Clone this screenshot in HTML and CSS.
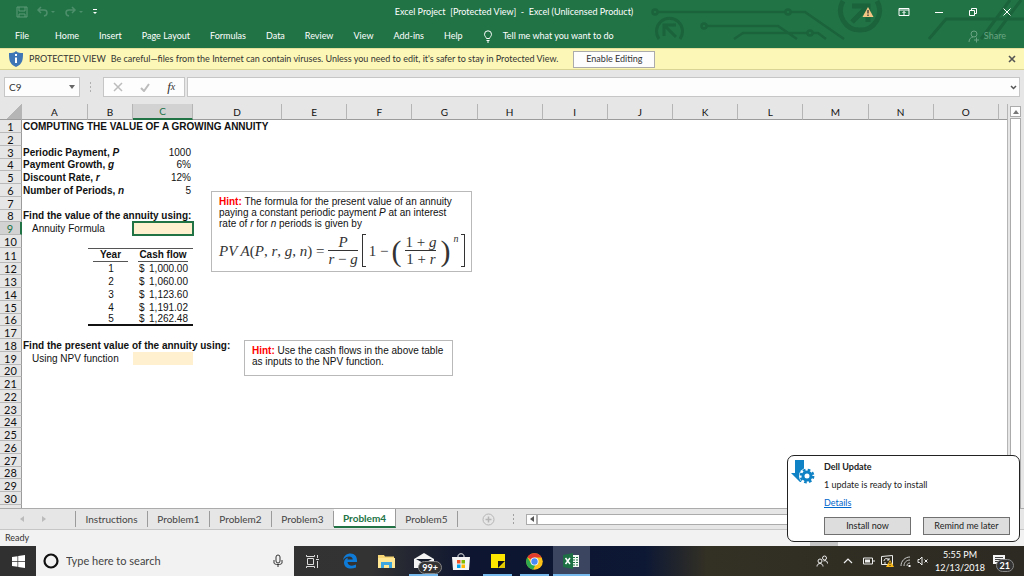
FILE: index.html
```html
<!DOCTYPE html>
<html lang="en">
<head>
    <meta charset="UTF-8">
    <meta name="viewport" content="width=device-width, initial-scale=1.0">
    <title>Excel Project</title>
    <link rel="stylesheet" href="styles.css">
</head>
<body>
    <header class="ribbon">
        <svg class="circuit" width="384" height="40" viewBox="0 0 384 40" fill="none" stroke="#1b633b" stroke-width="2.5">
            <circle cx="15" cy="12" r="2.5"/>
            <path d="M18 12h127M151 12h14l39 27"/>
            <circle cx="148" cy="12" r="2.5"/>
            <circle cx="64" cy="26" r="2.5"/>
            <path d="M67 26h71l19 13M94 39l9-6h64M172 33h6l8 6"/>
            <circle cx="170" cy="33" r="2.5"/>
            <path d="M19 39a13 13 0 1 1 21 0M36 37L25 26M24 36V25h12" stroke-width="3"/>
            <path d="M203 1a19.500 19.500 0 1 0 34 0" stroke-width="5"/>
            <path d="M212 22l15-15M212 6h16v16" stroke-width="5"/>
            <path d="M289 39l17-20h78M341 39l29-39M352 39l29-39" stroke-width="3"/>
        </svg>
        <div class="titlebar">
            <div class="quick">
                <button aria-label="Save"><svg width="12" height="12" viewBox="0 0 12 12" fill="none" stroke="#5c9a77"><path d="M1 1h10v10H1zM3 1v4h6V1M3 11V8h6v3"/></svg></button>
                <button aria-label="Undo"><svg width="20" height="12" viewBox="0 0 20 12" fill="none" stroke="#4d8f6b" stroke-width="1.500"><path d="M5 1L2 4l3 3M2 4h6c4 0 4 5 0 6"/><path d="M15 5h4l-2 2z" fill="#4d8f6b" stroke="none"/></svg></button>
                <button aria-label="Redo"><svg width="20" height="12" viewBox="0 0 20 12" fill="none" stroke="#4d8f6b" stroke-width="1.500"><path d="M8 1l3 3-3 3M11 4H5c-4 0-4 5 0 6"/><path d="M15 5h4l-2 2z" fill="#4d8f6b" stroke="none"/></svg></button>
                <button aria-label="Customize"><svg width="6" height="8" viewBox="0 0 6 8" fill="#fff"><path d="M1 1h4v1H1zM1 4h4L3 6z"/></svg></button>
            </div>
            <div class="title">Excel Project&nbsp; [Protected View]&nbsp; -&nbsp; Excel (Unlicensed Product)</div>
            <div class="window-buttons">
                <svg class="warn" width="12" height="12" viewBox="0 0 12 12"><path d="M6 1l5.500 10H.5z" fill="#f5c583"/><path d="M6 4v3.500M6 8.500V10" stroke="#333" stroke-width="1.300"/></svg>
                <button aria-label="Ribbon options"><svg width="12" height="10" viewBox="0 0 12 10" fill="none" stroke="#fff"><path d="M1 1.500h10v7H1zM1 3h10M6 8V4.500M4.500 6L6 4.500 7.500 6"/></svg></button>
                <button aria-label="Minimize"><svg width="10" height="10" viewBox="0 0 10 10" stroke="#fff"><path d="M1 5.500h8"/></svg></button>
                <button aria-label="Restore"><svg width="10" height="10" viewBox="0 0 10 10" fill="none" stroke="#fff"><path d="M1.500 3.500h5v5h-5zM3.500 3V1.500h5v5H7"/></svg></button>
                <button aria-label="Close"><svg width="10" height="10" viewBox="0 0 10 10" stroke="#fff"><path d="M1.500 1.500l7 7M8.500 1.500l-7 7"/></svg></button>
            </div>
        </div>
        <nav class="menu">
            <button class="file">File</button>
            <button>Home</button>
            <button>Insert</button>
            <button>Page Layout</button>
            <button>Formulas</button>
            <button>Data</button>
            <button>Review</button>
            <button>View</button>
            <button>Add-ins</button>
            <button>Help</button>
            <button class="tell"><svg width="10" height="13" viewBox="0 0 10 13" fill="none" stroke="#fff"><path d="M3.500 8.500C3 7 1.500 6 1.500 4.300a3.500 3.500 0 0 1 7 0C8.500 6 7 7 6.500 8.500zM3.500 10.500h3M4 12h2"/></svg>Tell me what you want to do</button>
            <button class="share"><svg width="12" height="13" viewBox="0 0 12 13" fill="none" stroke="#6aa583"><circle cx="6" cy="4" r="3"/><path d="M1 12c0-3 2-5 4-5M6 10h5M8.500 7.500v5"/></svg>Share</button>
        </nav>
    </header>

    <div class="protected">
        <svg width="16" height="16" viewBox="0 0 16 16"><path d="M8 0c2 2 4 2 7 2 0 6 0 11-7 14C1 13 1 8 1 2c3 0 5 0 7-2z" fill="#3f76b5"/><path d="M8 3v2M8 6.500V12" stroke="#fff" stroke-width="2"/></svg>
        <span class="protected-title">PROTECTED VIEW</span>
        <span>Be careful—files from the Internet can contain viruses. Unless you need to edit, it's safer to stay in Protected View.</span>
        <button class="enable">Enable Editing</button>
        <button class="dismiss" aria-label="Close message"><svg width="8" height="8" viewBox="0 0 8 8" stroke="#555" stroke-width="1.600"><path d="M1 1l6 6M7 1L1 7"/></svg></button>
    </div>

    <div class="formula-bar">
        <div class="name-box">
            <input type="text" value="C9" aria-label="Name box">
            <svg width="6" height="4" viewBox="0 0 6 4" fill="#666"><path d="M0 0h6L3 4z"/></svg>
        </div>
        <svg class="dots" width="2" height="10" viewBox="0 0 2 10" fill="#b0b0b0"><path d="M0 0h1v2H0zM0 4h1v2H0zM0 8h1v2H0z"/></svg>
        <div class="fx-buttons">
            <button aria-label="Cancel"><svg width="10" height="10" viewBox="0 0 10 10" stroke="#bcbcbc" stroke-width="1.500"><path d="M1 1l8 8M9 1L1 9"/></svg></button>
            <button aria-label="Enter"><svg width="10" height="10" viewBox="0 0 10 10" fill="none" stroke="#bcbcbc" stroke-width="2"><path d="M1 6l3 3 5-7"/></svg></button>
            <button class="fx" aria-label="Insert function">f<small>x</small></button>
        </div>
        <div class="formula">
            <input type="text" aria-label="Formula">
            <svg width="7" height="5" viewBox="0 0 7 5" fill="none" stroke="#555" stroke-width="1.500"><path d="M1 1l2.500 2.500L6 1"/></svg>
        </div>
    </div>

    <main class="workbook">
        <div class="sheet">
            <table class="cells">
                <colgroup>
                    <col class="col-head"><col class="col-a"><col class="col-b"><col class="col-c"><col class="col-d">
                    <col><col><col><col><col><col><col><col><col><col><col>
                    <col class="col-rest">
                </colgroup>
                <thead>
                    <tr>
                        <th class="corner"></th><th>A</th><th>B</th><th class="active">C</th><th>D</th><th>E</th><th>F</th><th>G</th><th>H</th><th>I</th><th>J</th><th>K</th><th>L</th><th>M</th><th>N</th><th>O</th><th class="rest"></th>
                    </tr>
                </thead>
                <tbody>
                    <tr><th>1</th><td class="bold">COMPUTING THE VALUE OF A GROWING ANNUITY</td></tr>
                    <tr><th>2</th></tr>
                    <tr><th>3</th><td class="bold">Periodic Payment, <i>P</i></td><td></td><td class="num">1000</td></tr>
                    <tr><th>4</th><td class="bold">Payment Growth, <i>g</i></td><td></td><td class="num">6%</td></tr>
                    <tr><th>5</th><td class="bold">Discount Rate, <i>r</i></td><td></td><td class="num">12%</td></tr>
                    <tr><th>6</th><td class="bold">Number of Periods, <i>n</i></td><td></td><td class="num">5</td></tr>
                    <tr><th>7</th></tr>
                    <tr><th>8</th><td class="bold">Find the value of the annuity using:</td></tr>
                    <tr><th class="active">9</th><td class="indent">Annuity Formula</td><td></td><td class="input selected"></td></tr>
                    <tr><th>10</th></tr>
                    <tr class="table-head"><th>11</th><td></td><td><span>Year</span></td><td><span>Cash flow</span></td></tr>
                    <tr><th>12</th><td></td><td class="year">1</td><td><div class="money"><span>$</span><span>1,000.00</span></div></td></tr>
                    <tr><th>13</th><td></td><td class="year">2</td><td><div class="money"><span>$</span><span>1,060.00</span></div></td></tr>
                    <tr><th>14</th><td></td><td class="year">3</td><td><div class="money"><span>$</span><span>1,123.60</span></div></td></tr>
                    <tr><th>15</th><td></td><td class="year">4</td><td><div class="money"><span>$</span><span>1,191.02</span></div></td></tr>
                    <tr class="table-end"><th>16</th><td></td><td class="year">5</td><td><div class="money"><span>$</span><span>1,262.48</span></div></td></tr>
                    <tr><th>17</th></tr>
                    <tr><th>18</th><td class="bold">Find the present value of the annuity using:</td></tr>
                    <tr><th>19</th><td class="indent">Using NPV function</td><td></td><td class="input"></td></tr>
                    <tr><th>20</th></tr>
                    <tr><th>21</th></tr>
                    <tr><th>22</th></tr>
                    <tr><th>23</th></tr>
                    <tr><th>24</th></tr>
                    <tr><th>25</th></tr>
                    <tr><th>26</th></tr>
                    <tr><th>27</th></tr>
                    <tr><th>28</th></tr>
                    <tr><th>29</th></tr>
                    <tr><th>30</th></tr>
                    <tr><th>31</th></tr>
                </tbody>
            </table>

            <div class="hint hint-formula">
                <p><b>Hint:</b> The formula for the present value of an annuity paying a constant periodic payment <i>P</i> at an interest rate of <i>r</i> for <i>n</i> periods is given by</p>
                <div class="equation">
                    <span><i>PV A</i>(<i>P</i>, <i>r</i>, <i>g</i>, <i>n</i>) =</span>
                    <span class="frac"><span><i>P</i></span><span><i>r</i> − <i>g</i></span></span>
                    <span class="bracket"></span>
                    <span>1 −</span>
                    <span class="paren">(</span>
                    <span class="frac"><span>1 + <i>g</i></span><span>1 + <i>r</i></span></span>
                    <span class="paren">)</span>
                    <i class="power">n</i>
                    <span class="bracket right"></span>
                </div>
            </div>
            <div class="hint hint-npv">
                <p><b>Hint:</b> Use the cash flows in the above table as inputs to the NPV function.</p>
            </div>
        </div>
        <div class="scroll-v">
            <button aria-label="Scroll up"><svg width="6" height="4" viewBox="0 0 6 4" fill="#777"><path d="M0 4h6L3 0z"/></svg></button>
            <div class="track"></div>
        </div>
    </main>

    <div class="sheet-tabs">
        <div class="tab-arrows">
            <button aria-label="Previous sheet"><svg width="4" height="6" viewBox="0 0 4 6" fill="#bbb"><path d="M4 0v6L0 3z"/></svg></button>
            <button aria-label="Next sheet"><svg width="4" height="6" viewBox="0 0 4 6" fill="#bbb"><path d="M0 0v6l4-3z"/></svg></button>
        </div>
        <button class="tab">Instructions</button>
        <button class="tab">Problem1</button>
        <button class="tab">Problem2</button>
        <button class="tab">Problem3</button>
        <button class="tab current">Problem4</button>
        <button class="tab">Problem5</button>
        <button class="add" aria-label="New sheet"><svg width="13" height="13" viewBox="0 0 13 13" fill="none" stroke="#b5b5b5"><circle cx="6.500" cy="6.500" r="5.500"/><path d="M3.500 6.500h6M6.500 3.500v6" stroke-width="1.500"/></svg></button>
        <svg class="dots" width="2" height="10" viewBox="0 0 2 10" fill="#a0a0a0"><path d="M0 0h1v2H0zM0 4h1v2H0zM0 8h1v2H0z"/></svg>
        <div class="scroll-h">
            <button aria-label="Scroll left"><svg width="4" height="6" viewBox="0 0 4 6" fill="#555"><path d="M4 0v6L0 3z"/></svg></button>
            <div class="track"></div>
        </div>
    </div>

    <div class="status">
        <span>Ready</span>
        <div class="views"><span class="view on"></span><span class="view"></span><span class="view"></span></div>
    </div>

    <footer class="taskbar">
        <button class="start" aria-label="Start"><svg width="13" height="13" viewBox="0 0 13 13" fill="#fff"><path d="M0 2l5.500-.8V6H0zM6.200 1L13 0v6H6.200zM0 6.800h5.500v4.900L0 11zM6.200 6.800H13V13l-6.800-1z"/></svg></button>
        <label class="search">
            <svg width="16" height="16" viewBox="0 0 16 16" fill="none" stroke="#111" stroke-width="2.200"><circle cx="8" cy="8" r="6.500"/></svg>
            <input type="text" placeholder="Type here to search">
            <svg width="10" height="14" viewBox="0 0 10 14" fill="none" stroke="#333"><rect x="3" y="1" width="4" height="8" rx="2"/><path d="M1 6v3c0 2 8 2 8 0V6M5 10.500V13"/></svg>
        </label>
        <div class="apps">
            <button aria-label="Task view"><svg width="13" height="13" viewBox="0 0 13 13" fill="none" stroke="#ddd"><path d="M1.500 3.500h6v6h-6zM.5 0v1.500h8V0M.5 13v-1.500h8V13M11.500 0v3M11.500 6v7M10 4.500h3"/></svg></button>
            <button aria-label="Edge"><svg width="16" height="16" viewBox="0 0 16 16"><path d="M1 7C2 2.500 5 .5 8.500.5 13 .5 15.500 4 15 9H5.500c.3 4 5 4.500 8.500 2.500v3C8 17 2 15 2 9.500 2 7 4 5 6 4.500 5.500 5.500 5.500 6 5.500 6.500h5.300C10.500 2.500 4.500 2.500 1 7z" fill="#0f7bd8"/></svg></button>
            <button aria-label="File Explorer"><svg width="17" height="15" viewBox="0 0 17 15"><path d="M0 1h6l1 1.500h9V14H0z" fill="#f6d675"/><path d="M0 4h17v10H0z" fill="#ffe794"/><path d="M3 8h11v6h-3v-3H6v3H3z" fill="#3da6df"/></svg></button>
            <button class="running" aria-label="Mail"><svg width="20" height="16" viewBox="0 0 20 16"><path d="M0 6l10-6 10 6v9H0z" fill="#f4f4f4"/><path d="M2 6h16l-8 4.500z" fill="#141b2a"/></svg><span class="badge">99+</span></button>
            <button aria-label="Store"><svg width="18" height="17" viewBox="0 0 18 17"><path d="M6 5V3c0-3 6-3 6 0v2" fill="none" stroke="#eee"/><path d="M0 4h18l-1 13H1z" fill="#f4f4f4"/><path d="M5 7h3.500v3.500H5z" fill="#f25022"/><path d="M9.500 7H13v3.500H9.500z" fill="#7fba00"/><path d="M5 11.500h3.500V15H5z" fill="#00a4ef"/><path d="M9.500 11.500H13V15H9.500z" fill="#ffb900"/></svg></button>
            <button class="running" aria-label="Sticky Notes"><svg width="14" height="14" viewBox="0 0 14 14"><path d="M0 0h14v14H0z" fill="#ffe600"/><path d="M7 14V7h7z" fill="#151515"/><path d="M8 14l6-6v6z" fill="#e0c700"/></svg></button>
            <button class="running" aria-label="Chrome"><svg width="17" height="17" viewBox="0 0 17 17"><circle cx="8.500" cy="8.500" r="8.300" fill="#fbc116"/><path d="M8.500 8.500L1.300 4.300A8.300 8.300 0 0 1 15.700 4.500H8.500z" fill="#e33b2e"/><path d="M1.300 4.300l4 6.500 4 1.500-2.300 4.400A8.300 8.300 0 0 1 1.300 4.300z" fill="#2da94f"/><circle cx="8.500" cy="8.500" r="4" fill="#fff"/><circle cx="8.500" cy="8.500" r="3.200" fill="#4a8af4"/></svg></button>
            <button class="running excel" aria-label="Excel"><svg width="17" height="16" viewBox="0 0 17 16"><path d="M9 2h7v12H9z" fill="#f4f8f5"/><path d="M10 4h2v1h-2zM10 6.500h2v1h-2zM10 9h2v1h-2zM10 11.500h2v1h-2zM13 4h2v1h-2zM13 6.500h2v1h-2zM13 9h2v1h-2zM13 11.500h2v1h-2z" fill="#217346"/><path d="M0 2l10-2v16L0 14z" fill="#1d7044"/><path d="M2.500 5l4.500 6M7 5l-4.500 6" stroke="#fff" stroke-width="1.500"/></svg></button>
        </div>
        <div class="tray">
            <svg width="12" height="12" viewBox="0 0 12 12" fill="none" stroke="#eee"><circle cx="4" cy="6" r="2"/><path d="M1 11.500c0-4 6-4 6 0"/><circle cx="8.500" cy="3" r="2"/><path d="M7.500 6c2-1 4 0 4 2.500"/></svg>
            <svg class="chevron" width="10" height="6" viewBox="0 0 10 6" fill="none" stroke="#eee" stroke-width="1.200"><path d="M1 5l4-4 4 4"/></svg>
            <svg width="12" height="8" viewBox="0 0 12 8" fill="none" stroke="#eee"><path d="M.5 1h9v6h-9zM11 3v2"/><path d="M2 2.500h5v3H2z" fill="#eee" stroke="none"/></svg>
            <svg width="13" height="12" viewBox="0 0 13 12"><path d="M.5 1.500l11-1v9h-11z" fill="none" stroke="#eee"/><path d="M3 6c0-3 4-3 5-1M8 3v2H6M3 8h2" fill="none" stroke="#eee"/><path d="M9 5l4 7H5z" fill="#f7b718"/><path d="M9 7v2M9 10v1" stroke="#222"/></svg>
            <svg width="11" height="11" viewBox="0 0 11 11" fill="none" stroke="#ccc"><path d="M1 10C1 5 5 1 10 1M4 10c0-3.500 2.500-6 6-6M7 10c0-2 1-3 3-3"/><path d="M8.500 9h2v2h-2z" fill="#fff" stroke="none"/></svg>
            <svg width="12" height="10" viewBox="0 0 12 10" fill="none" stroke="#eee"><path d="M1 3.500h1.500L5 1v8L2.500 6.500H1zM7.500 3.500l3 3M10.500 3.500l-3 3"/></svg>
            <div class="clock"><span>5:55 PM</span><span>12/13/2018</span></div>
            <button class="notes" aria-label="Notifications"><svg width="13" height="13" viewBox="0 0 13 13"><path d="M0 0h12v9H6l-2 3V9H0z" fill="#f4f4f4"/><path d="M2 2.500h8M2 4.500h8M2 6.500h6" stroke="#444"/></svg><span class="badge">21</span></button>
        </div>
    </footer>

    <section class="popup">
        <svg width="24" height="24" viewBox="0 0 24 24"><path d="M4 0h9v9l-3 4 1 9H9l-9-9h4z" fill="#0e82c5"/><circle cx="16" cy="16" r="8" fill="#fff"/><circle cx="16" cy="16" r="4" fill="none" stroke="#0e82c5" stroke-width="3"/><circle cx="16" cy="16" r="6.200" fill="none" stroke="#0e82c5" stroke-width="2.400" stroke-dasharray="2.600 2.270"/></svg>
        <div class="popup-body">
            <h2>Dell Update</h2>
            <p>1 update is ready to install</p>
            <a href="#">Details</a>
            <div class="popup-actions">
                <button>Install now</button>
                <button>Remind me later</button>
            </div>
        </div>
    </section>
</body>
</html>
```
FILE: styles.css
```css
* {
    box-sizing: border-box;
}
body {
    margin: 0;
    height: 100vh;
    display: flex;
    flex-direction: column;
    overflow: hidden;
    position: relative;
    font-family: Lato, "Open Sans", sans-serif;
    font-size: 9px;
    line-height: 12px;
    color: #333;
    background: #e6e6e6;
}
button, input {
    font: inherit;
    color: inherit;
    border: 0;
    padding: 0;
    margin: 0;
    background: none;
}
button {
    display: flex;
    align-items: center;
    justify-content: center;
    white-space: nowrap;
}
svg {
    display: block;
    flex: none;
}

/* green title and menu */
.ribbon {
    position: relative;
    background: #217346;
    color: #fff;
}
.circuit {
    position: absolute;
    top: 0;
    right: 0;
}
.titlebar, .menu {
    position: relative;
    display: flex;
    align-items: center;
    height: 24px;
}
.titlebar {
    justify-content: space-between;
    padding: 0 12px 0 16px;
}
.quick {
    display: flex;
    flex: 1;
    gap: 8px;
}
.window-buttons {
    display: flex;
    flex: 1;
    justify-content: flex-end;
    align-items: center;
    gap: 24px;
}
.menu {
    gap: 20px;
    padding: 0 18px 0 15px;
}
.menu .file {
    margin-right: 6px;
}
.menu .tell {
    gap: 10px;
}
.menu .share {
    gap: 4px;
    margin-left: auto;
    color: #6aa583;
}

/* protected view message */
.protected {
    display: flex;
    align-items: center;
    gap: 5px;
    height: 22px;
    padding: 0 8px;
    background: #fcf7b6;
    border-top: 1px solid #e6e09a;
    border-bottom: 1px solid #d9d494;
}
.enable {
    width: 82px;
    height: 17px;
    margin-left: 10px;
    background: #fdfdfd;
    border: 1px solid #ababab;
}
.dismiss {
    margin-left: auto;
}

.formula-bar {
    display: flex;
    align-items: center;
    height: 34px;
    padding: 0 4px;
}
.name-box, .fx-buttons, .formula {
    display: flex;
    align-items: center;
    height: 20px;
    background: #fdfdfd;
    border: 1px solid #c6c6c6;
}
.name-box {
    width: 76px;
    padding: 0 4px;
}
.name-box input {
    width: 60px;
    flex: 1;
    font-size: 10px;
}
.dots {
    margin: 0 11px 0 10px;
}
.fx-buttons {
    width: 82px;
    justify-content: space-around;
    margin-right: 2px;
}
.fx {
    font-family: "Liberation Serif", serif;
    font-size: 13px;
    font-style: italic;
}
.fx small {
    font-size: 10px;
}
.formula {
    flex: 1;
    padding-right: 2px;
}
.formula input {
    flex: 1;
}

/* grid */
.workbook {
    display: flex;
    flex: 1;
    min-height: 0;
}
.sheet {
    position: relative;
    flex: 1;
    overflow: hidden;
}
.cells {
    width: 100%;
    table-layout: fixed;
    border-collapse: separate;
    border-spacing: 0;
    background: #fff;
    border-right: 1px solid #b5b5b5;
    font-family: "Liberation Sans", Arial, sans-serif;
    font-size: 10px;
    line-height: 12px;
    color: #111;
}
.col-head { width: 22px; }
.col-a { width: 66px; }
.col-b { width: 45px; }
.col-c { width: 60px; }
.col-d { width: 89px; }
.col-rest { width: 8px; }
.cells th, .cells td {
    height: 13px;
    padding: 0;
    white-space: nowrap;
    vertical-align: middle;
}
.cells tbody tr:nth-child(4n) th,
.cells tbody tr:nth-child(4n) td {
    height: 12px;
}
.cells th {
    font-family: Lato, "Open Sans", sans-serif;
    font-size: 11px;
    font-weight: normal;
    background: #e6e6e6;
}
.cells thead th {
    height: 16px;
    line-height: 14px;
    font-size: 10px;
    border-right: 1px solid #b5b5b5;
    border-bottom: 1px solid #9b9b9b;
}
.cells thead .rest {
    border-right: 0;
}
.cells thead .corner {
    background: linear-gradient(135deg, #e6e6e6 60%, #b5b5b5 60%);
}
.cells tbody th {
    line-height: 11px;
    border-right: 1px solid #9b9b9b;
    border-bottom: 1px solid #b9b9b9;
}
.cells thead .active {
    color: #217346;
    background: #d2d2d2;
    border-bottom: 2px solid #217346;
}
.cells tbody .active {
    color: #217346;
    background: #d2d2d2;
    border-right: 2px solid #217346;
}
.cells td {
    padding-left: 1px;
}
.cells .bold {
    font-weight: bold;
}
.cells .indent {
    padding-left: 10px;
}
.cells .num {
    text-align: right;
    padding-right: 2px;
}
.cells .year {
    text-align: center;
}
.cells .input {
    background: #fff0cf;
}
.cells .selected {
    outline: 2px solid #217346;
    outline-offset: -1px;
}
.money {
    display: flex;
    justify-content: space-between;
    padding: 0 5px;
}
.cells .table-head th, .cells .table-head td {
    height: 15px;
}
.cells .table-head td {
    padding: 0 5px;
    text-align: center;
    font-weight: bold;
    vertical-align: top;
}
.table-head td + td {
    border-top: 1px solid #555;
}
.table-head span {
    display: block;
    border-bottom: 1px solid #555;
}
.table-end td {
    line-height: 10px;
}
.table-end td + td {
    border-bottom: 2px solid #111;
}

.hint {
    position: absolute;
    padding: 4px 7px;
    background: #fff;
    border: 1px solid #b9b9b9;
    font-family: "Liberation Sans", Arial, sans-serif;
    font-size: 10px;
    line-height: 11px;
    color: #111;
}
.hint p {
    margin: 0;
}
.hint b {
    color: #f00;
}
.hint-formula {
    left: 211px;
    top: 87px;
    width: 261px;
    height: 81px;
}
.hint-npv {
    left: 244px;
    top: 236px;
    width: 209px;
    height: 36px;
}
.equation {
    display: flex;
    align-items: center;
    gap: 3px;
    margin-top: 5px;
    font-family: "Liberation Serif", serif;
    font-size: 15px;
    line-height: 16px;
    color: #333;
    white-space: nowrap;
}
.frac {
    display: flex;
    flex-direction: column;
    padding: 0 1px;
    text-align: center;
}
.frac span + span {
    border-top: 1px solid #333;
}
.bracket {
    flex: none;
    width: 4px;
    height: 33px;
    border: 1px solid #333;
    border-right: 0;
}
.bracket.right {
    border-right: 1px solid #333;
    border-left: 0;
}
.paren {
    font-size: 30px;
    line-height: 30px;
}
.power {
    align-self: flex-start;
    font-size: 10px;
    line-height: 10px;
}

.scroll-v {
    display: flex;
    flex-direction: column;
    width: 16px;
    padding: 2px 3px 0 2px;
}
.scroll-v button, .scroll-h button {
    width: 11px;
    height: 11px;
    background: #fdfdfd;
    border: 1px solid #ababab;
}
.scroll-v .track {
    flex: 1;
    width: 11px;
    margin-top: 1px;
    background: #fff;
    border: 1px solid #ababab;
}

/* sheet tabs */
.sheet-tabs {
    display: flex;
    align-items: center;
    height: 22px;
    padding-right: 17px;
    border-top: 1px solid #ababab;
    border-bottom: 1px solid #c6c6c6;
    font-size: 10px;
    color: #444;
}
.tab-arrows {
    display: flex;
    gap: 18px;
    width: 75px;
    padding-left: 20px;
}
.tab {
    width: 62px;
    height: 16px;
    border-right: 1px solid #9b9b9b;
}
.tab:nth-of-type(1) {
    width: 73px;
    border-left: 1px solid #9b9b9b;
}
.tab.current {
    height: 19px;
    align-self: flex-start;
    font-weight: bold;
    color: #217346;
    background: #fff;
    border-bottom: 2px solid #217346;
}
.add {
    margin: 0 8px 0 24px;
}
.scroll-h {
    display: flex;
    flex: 1;
}
.scroll-h .track {
    flex: 1;
    background: #fff;
    border: 1px solid #ababab;
}

.status {
    display: flex;
    justify-content: space-between;
    align-items: center;
    height: 16px;
    padding: 0 130px 0 5px;
    background: #f2f2f2;
}
.views {
    display: flex;
    align-self: flex-end;
}
.view {
    width: 28px;
    height: 6px;
}
.view.on {
    background: #c6c6c6;
}

/* taskbar */
.taskbar {
    display: flex;
    height: 30px;
    color: #fff;
    background: linear-gradient(90deg, #303030 0, #333 36%, #0d1530 46%, #0d1834 63%, #333024 69%, #2c2a22 100%);
}
.start {
    width: 36px;
}
.search {
    display: flex;
    align-items: center;
    width: 258px;
    padding: 0 11px 0 7px;
    background: #f2f2f2;
}
.search input {
    flex: 1;
    min-width: 0;
    padding-left: 7px;
    font-size: 11px;
}
.search input::placeholder {
    color: #444;
    opacity: 1;
}
.apps {
    display: flex;
}
.apps button {
    position: relative;
    width: 37px;
}
.apps .running::after {
    content: "";
    position: absolute;
    left: 4px;
    right: 4px;
    bottom: 0;
    height: 2px;
    background: #76b9ed;
}
.apps .excel {
    background: #3b4560;
}
.apps .excel::after {
    left: 0;
    right: 0;
}
.badge {
    position: absolute;
    right: 0;
    bottom: 2px;
    padding: 0 3px;
    border: 1px solid #888;
    border-radius: 7px;
    background: #333;
    font-size: 9px;
    line-height: 11px;
    font-weight: bold;
}
.tray {
    display: flex;
    align-items: center;
    gap: 6px;
    margin-left: auto;
    padding-right: 10px;
}
.chevron {
    margin: 0 4px 0 9px;
}
.clock {
    display: flex;
    flex-direction: column;
    align-items: center;
    margin-right: 2px;
    line-height: 13px;
}
.notes {
    position: relative;
    width: 21px;
    height: 26px;
    justify-content: flex-start;
}

.popup {
    position: absolute;
    right: 4px;
    bottom: 34px;
    display: flex;
    gap: 9px;
    width: 233px;
    height: 87px;
    padding: 4px 4px 4px 3px;
    background: #fff;
    border: 1px solid #222;
    border-radius: 7px;
    color: #222;
}
.popup-body {
    flex: 1;
}
.popup h2 {
    margin: 1px 0 6px;
    font-size: 9px;
}
.popup p {
    margin: 0 0 6px;
}
.popup a {
    color: #0066cc;
}
.popup-actions {
    display: flex;
    gap: 12px;
    margin-top: 8px;
}
.popup-actions button {
    width: 87px;
    height: 18px;
    background: #ddd;
    border: 1px solid #707070;
}
```
